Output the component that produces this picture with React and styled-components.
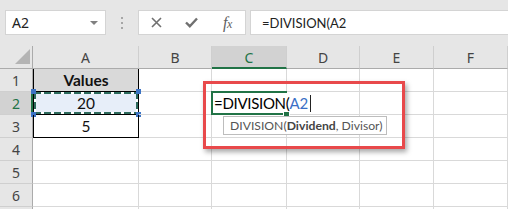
import React from 'react';
import styled, { createGlobalStyle, css } from 'styled-components';

const Global = createGlobalStyle`
  html, body { margin: 0; padding: 0; background: #fff; }
  body { width: 508px; height: 209px; overflow: hidden; font-family: "Noto Sans", sans-serif; }
`;

const GREEN = '#217346';
const GRID = '#d9d9d9';
const HEAD_BG = '#e6e6e6';

const Page = styled.div`
  width: 508px;
  height: 209px;
  overflow: hidden;
  background: #fff;
`;

const Toolbar = styled.div`
  height: 46px;
  box-sizing: border-box;
  background: ${HEAD_BG};
  display: flex;
  align-items: flex-start;
  padding: 10px 0 0 5px;
`;

const NameBox = styled.div`
  width: 101px;
  height: 25px;
  box-sizing: border-box;
  background: #fff;
  border: 1px solid #d4d4d4;
  display: flex;
  align-items: center;
  justify-content: space-between;
  padding: 0 7px 0 6px;
  font: 14px "Noto Sans", sans-serif;
  color: #222;
`;

const DropArrow = styled.span`
  width: 0;
  height: 0;
  border-left: 4px solid transparent;
  border-right: 4px solid transparent;
  border-top: 4px solid #808080;
`;

const Grip = styled.div`
  width: 2px;
  height: 25px;
  margin: 0 15px 0 15px;
  display: flex;
  flex-direction: column;
  justify-content: center;
  gap: 3px;
  span {
    width: 2px;
    height: 2px;
    background: #a6a6a6;
  }
`;

const ButtonBox = styled.div`
  width: 108px;
  height: 25px;
  box-sizing: border-box;
  background: #fff;
  border: 1px solid #d4d4d4;
  display: grid;
  grid-template-columns: repeat(3, 1fr);
  align-items: center;
  justify-items: center;
  color: #6f6f6f;
`;

const Fx = styled.span`
  font: italic 16px "Liberation Serif", serif;
  color: #5f5f5f;
  letter-spacing: -0.5px;
  sub { font-size: 12px; vertical-align: 0; }
`;

const FormulaInput = styled.div`
  flex: 1;
  margin-left: 4px;
  height: 25px;
  box-sizing: border-box;
  background: #fff;
  border: 1px solid #d4d4d4;
  border-right: none;
  display: flex;
  align-items: center;
  padding-left: 11px;
  font: 13px Lato, sans-serif;
  color: #222;
`;

const Sheet = styled.div`
  position: relative;
  display: grid;
  grid-template-columns: 33px 106px 73px 75px 73px 74px 74px;
  grid-auto-rows: 23px;
  background: #fff;
`;

const Corner = styled.div`
  background: ${HEAD_BG};
  border-right: 1px solid #ababab;
  border-bottom: 1px solid #ababab;
  display: flex;
  align-items: flex-end;
  justify-content: flex-end;
  padding: 0 2px 4px 0;
`;

const ColHeader = styled.div`
  background: ${p => (p.$active ? '#d2d2d2' : HEAD_BG)};
  border-right: 1px solid #cfcfcf;
  border-bottom: ${p => (p.$active ? `2px solid ${GREEN}` : '1px solid #ababab')};
  color: ${p => (p.$active ? GREEN : '#444')};
  display: flex;
  align-items: center;
  justify-content: center;
  font: 14px "Noto Sans", sans-serif;
  padding-top: ${p => (p.$active ? '1px' : '0')};
`;

const RowHeader = styled.div`
  background: ${p => (p.$active ? '#d2d2d2' : HEAD_BG)};
  border-right: ${p => (p.$active ? `2px solid ${GREEN}` : '1px solid #ababab')};
  border-bottom: 1px solid #cfcfcf;
  color: ${p => (p.$active ? GREEN : '#444')};
  display: flex;
  align-items: center;
  justify-content: center;
  font: 14px "Noto Sans", sans-serif;
  padding-left: ${p => (p.$active ? '1px' : '0')};
`;

const Cell = styled.div`
  position: relative;
  box-sizing: border-box;
  border-right: 1px solid ${GRID};
  border-bottom: 1px solid ${GRID};
  display: flex;
  align-items: center;
  justify-content: center;
  font: 15.5px Lato, sans-serif;
  color: #111;

  ${p => p.$table && css`
    border-right-color: #000;
    border-bottom-color: #000;
    border-left: 1px solid #000;
  `}

  ${p => p.$head && css`
    background: #d9d9d9;
    font-weight: 700;
  `}

  ${p => p.$ref && css`
    background:
      repeating-linear-gradient(90deg, #2d6a5c 0 7px, #fff 7px 10px) top left / 100% 2px no-repeat,
      repeating-linear-gradient(90deg, #2d6a5c 0 7px, #fff 7px 10px) bottom left / 100% 2px no-repeat,
      repeating-linear-gradient(180deg, #2d6a5c 0 7px, #fff 7px 10px) top left / 2px 100% no-repeat,
      repeating-linear-gradient(180deg, #2d6a5c 0 7px, #fff 7px 10px) top right / 2px 100% no-repeat,
      #e7eef9;
  `}

  ${p => p.$editing && css`
    z-index: 3;
    justify-content: flex-start;
    border: 2px solid ${GREEN};
    border-right: none;
    margin: -1px 0 0 -1px;
    padding-left: 1px;
    font-size: 15px;
  `}
`;

const Handle = styled.span`
  position: absolute;
  width: 5px;
  height: 5px;
  background: #3c73c4;
  ${p => (p.$top ? 'top: -3px;' : 'bottom: -3px;')}
  ${p => (p.$left ? 'left: -3px;' : 'right: -3px;')}
`;

const FillHandle = styled.span`
  position: absolute;
  right: -3px;
  bottom: -4px;
  width: 5px;
  height: 5px;
  background: ${GREEN};
  border: 1px solid #fff;
`;

const EditText = styled.span`
  white-space: nowrap;
  background: #fff;
  color: #000;
  display: inline-flex;
  align-items: center;
  position: relative;
  z-index: 4;
  letter-spacing: -0.3px;
`;

const RefText = styled.span`
  color: #3a6fc6;
  letter-spacing: 0;
`;

const Caret = styled.span`
  display: inline-block;
  width: 1px;
  height: 17px;
  background: #222;
  margin-left: 2px;
`;

const Annotation = styled.div`
  position: absolute;
  left: 203px;
  top: 35px;
  width: 202px;
  height: 68px;
  box-sizing: border-box;
  border: 3px solid #e8494b;
  box-shadow: 2px 3px 5px rgba(0, 0, 0, 0.35);
  z-index: 5;
  pointer-events: none;
`;

const Tooltip = styled.div`
  position: absolute;
  left: 223px;
  top: 70px;
  width: 164px;
  height: 19px;
  box-sizing: border-box;
  background: #fff;
  border: 1px solid #bdbdbd;
  z-index: 6;
  display: flex;
  align-items: center;
  padding-left: 6px;
  font: 12.2px Lato, sans-serif;
  color: #555;
  white-space: nowrap;
  b { color: #444; }
`;

const cols = ['A', 'B', 'C', 'D', 'E', 'F'];
const rows = [1, 2, 3, 4, 5, 6, 7];

function renderCell(r, c) {
  const key = `${c}${r}`;
  if (c === 'A' && r === 1) return <Cell key={key} $table $head>Values</Cell>;
  if (c === 'A' && r === 2)
    return (
      <Cell key={key} $table $ref>
        20
        <Handle $top $left />
        <Handle $top />
        <Handle $left />
        <Handle />
      </Cell>
    );
  if (c === 'A' && r === 3) return <Cell key={key} $table>5</Cell>;
  if (c === 'C' && r === 2)
    return (
      <Cell key={key} $editing>
        <EditText>
          =DIVISION(<RefText>A2</RefText>
          <Caret />
        </EditText>
        <FillHandle />
      </Cell>
    );
  return <Cell key={key} />;
}

export default function App() {
  return (
    <Page>
      <Global />
      <Toolbar>
        <NameBox>
          A2
          <DropArrow />
        </NameBox>
        <Grip>
          <span />
          <span />
          <span />
        </Grip>
        <ButtonBox>
          <svg width="11" height="11" viewBox="0 0 11 11">
            <path d="M1 1 L10 10 M10 1 L1 10" stroke="#707070" strokeWidth="1.6" fill="none" />
          </svg>
          <svg width="13" height="11" viewBox="0 0 13 11">
            <path d="M1 5.5 L4.8 9.2 L12 1.5" stroke="#707070" strokeWidth="2.4" fill="none" />
          </svg>
          <Fx>
            f<sub>x</sub>
          </Fx>
        </ButtonBox>
        <FormulaInput>=DIVISION(A2</FormulaInput>
      </Toolbar>
      <Sheet>
        <Corner>
          <svg width="15" height="15" viewBox="0 0 15 15">
            <polygon points="15,0 15,15 0,15" fill="#b4b4b4" />
          </svg>
        </Corner>
        {cols.map(c => (
          <ColHeader key={c} $active={c === 'C'}>
            {c}
          </ColHeader>
        ))}
        {rows.map(r => (
          <React.Fragment key={r}>
            <RowHeader $active={r === 2}>{r < 7 ? r : ''}</RowHeader>
            {cols.map(c => renderCell(r, c))}
          </React.Fragment>
        ))}
        <Annotation />
        <Tooltip>
          DIVISION(<b>Dividend</b>, Divisor)
        </Tooltip>
      </Sheet>
    </Page>
  );
}
